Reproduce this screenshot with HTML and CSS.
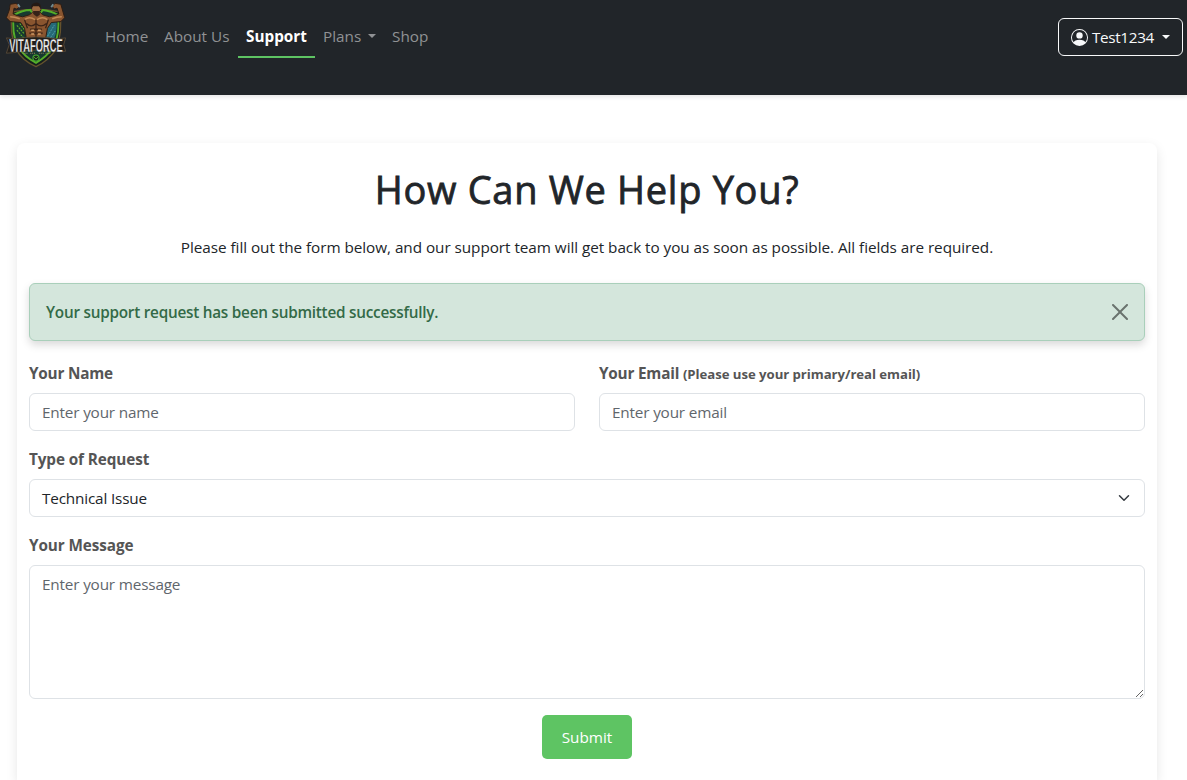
FILE: index.html
```html
<!DOCTYPE html>
<html lang="en">
<head>
<meta charset="utf-8">
<title>VitaForce Support</title>
<link rel="stylesheet" href="styles.css">
</head>
<body>
<header class="navbar">
  <a class="brand" href="#" aria-label="VitaForce">
    <svg class="logo" width="64" height="70" viewBox="-1.5 -2.5 67 73" preserveAspectRatio="none">
      <path d="M7 10 Q32 4 57 10 Q60 32 53 49 Q45 61 32 67 Q18 61 11 49 Q4 32 7 10Z" fill="#15201d" stroke="#65522d" stroke-width="1.4"/>
      <path d="M9 13 Q18 8 26 8 L29 12 L36 12 L39 8 Q48 9 55 13 Q57 32 51 46 Q43 57 32 63 Q20 57 13 46 Q6 31 9 13Z" fill="#17392f" stroke="#55ae29" stroke-width="2"/>
      <path d="M36 16 L53 15 Q55 28 51 38 L37 38Z" fill="#266a78"/>
      <path d="M12 24l8 9M12 29l7 8M15 22l9 12M13 17l7 7" stroke="#61aa28" stroke-width="1.2" stroke-dasharray="2 1"/>
      <path d="M48 20l-8 13M51 24l-8 13M52 30l-5 7" stroke="#63b1ba" stroke-width="1" stroke-dasharray="1 1"/>
      <path d="M5 2 L11 1 L15 4 L12 7 L9 6 L8 12 Q12 14 18 15 L25 13 L29 10 L36 10 L39 13 L46 15 Q52 14 56 12 L54 6 L51 7 L49 4 L52 1 L58 2 L60 9 L62 16 L58 20 L48 21 L44 27 L42 38 L22 38 L20 27 L16 21 L5 20 L1 16 L4 8Z" fill="#89552f" stroke="#2b1b12"/>
      <path d="M5 15 Q9 15 15 17 M59 15 Q54 15 49 17 M20 18 Q25 14 31 18 M33 18 Q39 14 44 18" fill="none" stroke="#c58a56" stroke-width="1.6"/>
      <path d="M22 22 Q27 27 32 22 Q37 27 43 22 M32 18v19 M26 28h12 M25 32h14 M20 18l3 9 M45 18l-3 9" fill="none" stroke="#3c2417" stroke-width="1.4"/>
      <path d="M27 29h3M34 29h3M27 33h3M34 33h3" stroke="#d19b65" stroke-width="1.6"/>
      <path d="M28 8 Q27 1 33 1 Q38 2 36 9 L35 13 L29 13Z" fill="#9b6840"/>
      <path d="M27 7 Q26 0 33 0 Q38 1 37 7 L35 4 L29 4Z" fill="#251a15"/>
      <path d="M29 9h7v4l-3 2-4-3z" fill="#352118"/>
      <path d="M13 2l2 3M50 2l-2 3" stroke="#718b91" stroke-width="2"/>
      <path d="M1 37 L10 38 Q32 34 54 38 L63 37 L61 44 L63 51 L51 51 Q32 48 13 52 L1 53 L4 44Z" fill="#201d1a" stroke="#5f503b" stroke-width=".8"/>
      <text class="logo-name" x="32" y="51.5" text-anchor="middle" textLength="56" lengthAdjust="spacingAndGlyphs">VITAFORCE</text>
      <path d="M18 53h6M26 53h5M35 53h5M42 53h5" stroke="#a08866" stroke-width="1.1" stroke-dasharray="1 1"/>
      <circle cx="32" cy="58" r="3.2" fill="#172a1b" stroke="#49af32" stroke-width="1.1"/>
      <path d="M30 57l2 2 2-2" fill="none" stroke="#70b044" stroke-width=".8"/>
    </svg>
  </a>
  <nav class="menu">
    <a class="link home" href="#">Home</a>
    <a class="link about" href="#">About Us</a>
    <a class="link active" href="#">Support</a>
    <a class="link plans" href="#">Plans<span class="caret"></span></a>
    <a class="link shop" href="#">Shop</a>
  </nav>
  <button class="account" type="button">
    <svg width="17" height="17" viewBox="0 0 16 16" fill="currentColor"><path d="M11 6a3 3 0 1 1-6 0 3 3 0 0 1 6 0"/><path fill-rule="evenodd" d="M0 8a8 8 0 1 1 16 0A8 8 0 0 1 0 8m8-7a7 7 0 0 0-5.468 11.37C3.242 11.226 4.805 10 8 10s4.757 1.225 5.468 2.37A7 7 0 0 0 8 1"/></svg>
    <span class="user">Test1234</span><span class="caret"></span>
  </button>
</header>
<main class="card">
  <h1 class="title"><span>How Can We Help You?</span></h1>
  <p class="intro"><span>Please fill out the form below, and our support team will get back to you as soon as possible. All fields are required.</span></p>
  <div class="alert" role="alert">
    <span class="alert-text">Your support request has been submitted successfully.</span>
    <svg class="close" width="16" height="16" viewBox="0 0 16 16"><path d="M.293.293a1 1 0 0 1 1.414 0L8 6.586 14.293.293a1 1 0 1 1 1.414 1.414L9.414 8l6.293 6.293a1 1 0 0 1-1.414 1.414L8 9.414l-6.293 6.293a1 1 0 0 1-1.414-1.414L6.586 8 .293 1.707a1 1 0 0 1 0-1.414"/></svg>
  </div>
  <form class="form">
    <div class="row">
      <div class="field">
        <label class="label" for="name">Your Name</label>
        <input class="control" id="name" placeholder="Enter your name">
      </div>
      <div class="field">
        <label class="label" for="email">Your Email <small class="hint">(Please use your primary/real email)</small></label>
        <input class="control" id="email" placeholder="Enter your email">
      </div>
    </div>
    <div class="field">
      <label class="label request" for="type">Type of Request</label>
      <div class="control select" id="type"><span class="choice">Technical Issue</span>
        <svg width="16" height="12" viewBox="0 0 16 16" fill="none" stroke="#343a40" stroke-width="2" stroke-linecap="round" stroke-linejoin="round"><path d="m2 5 6 6 6-6"/></svg>
      </div>
    </div>
    <div class="field">
      <label class="label" for="message">Your Message</label>
      <textarea class="control message" id="message" placeholder="Enter your message"></textarea>
    </div>
    <button class="submit" type="button">Submit</button>
  </form>
</main>
</body>
</html>
```
FILE: styles.css
```css
* { box-sizing: border-box; }
body {
  margin: 0;
  background: #fff;
  color: #212529;
  font: 15.3px/24px "Open Sans", "Noto Sans", sans-serif;
  letter-spacing: -0.1px;
}
.navbar {
  display: flex;
  align-items: flex-start;
  height: 95px;
  padding: 0 4px 0 4px;
  background: #212529;
  box-shadow: 0 2px 4px rgba(0, 0, 0, .1);
}
.brand { display: block; width: 93px; height: 70px; }
.logo { display: block; overflow: visible; }
.logo-name {
  font: bold 19px "Liberation Sans", sans-serif;
  letter-spacing: 0;
  fill: #eee;
  stroke: #252525;
  stroke-width: .3px;
}
.menu { display: flex; padding-top: 16px; }
.link {
  display: flex;
  align-items: center;
  height: 42px;
  padding: 0 8px;
  border-bottom: 2px solid transparent;
  color: #909294;
  letter-spacing: 0;
  text-decoration: none;
  white-space: nowrap;
}
.home { width: 59px; }
.about { width: 82px; }
.active {
  width: 77px;
  color: #fff;
  font-weight: 700;
  border-color: #5ec463;
}
.plans { width: 69px; }
.caret {
  margin-left: auto;
  border-top: 4.8px solid currentColor;
  border-left: 4.8px solid transparent;
  border-right: 4.8px solid transparent;
}
.account {
  display: flex;
  align-items: center;
  width: 125px;
  height: 38px;
  margin: 18px 0 0 auto;
  padding: 0 12px;
  border: 1px solid #f8f9fa;
  border-radius: 6px;
  background: transparent;
  color: #f8f9fa;
  font: inherit;
  letter-spacing: -.35px;
}
.user { margin-left: 4px; }
.card {
  width: 1140px;
  height: 637px;
  margin: 48px 0 0 17px;
  padding: 24px 12px 0;
  border-radius: 8px 8px 0 0;
  background: #fff;
  box-shadow: 0 4px 12px rgba(0, 0, 0, .1);
}
.title {
  margin: 0;
  font-size: 38px;
  font-weight: 500;
  line-height: 44px;
  letter-spacing: .7px;
  text-align: center;
  white-space: nowrap;
  -webkit-text-stroke: .8px #212529;
}
.intro {
  margin: 24px 0;
  letter-spacing: -.05px;
  text-align: center;
  white-space: nowrap;
}
.alert {
  display: flex;
  align-items: center;
  justify-content: space-between;
  height: 58px;
  padding: 0 16px;
  border: 1px solid #a9cfba;
  border-radius: 6px;
  background: #d4e6dc;
  color: #336a47;
  font-weight: 600;
  letter-spacing: -.24px;
  box-shadow: 0 4px 8px rgba(0, 0, 0, .15);
}
.close { fill: #6a736e; }
.form { display: flex; flex-direction: column; gap: 16px; padding-top: 20px; }
.row { display: grid; grid-template-columns: 1fr 1fr; gap: 24px; }
.field { display: flex; flex-direction: column; }
.label {
  height: 24px;
  margin-bottom: 8px;
  color: #555;
  font-weight: 700;
  white-space: nowrap;
}
.row .label { letter-spacing: -.2px; }
.label .hint { font-size: 13.2px; letter-spacing: -.05px; }
.control {
  width: 100%;
  height: 38px;
  padding: 6px 12px;
  border: 1px solid #dee2e6;
  border-radius: 6px;
  background: #fff;
  color: #212529;
  font: inherit;
  letter-spacing: -.17px;
}
.control::placeholder { color: #5f666c; opacity: 1; }
.select { display: flex; align-items: center; justify-content: space-between; }
.message { display: block; height: 134px; resize: vertical; }
.submit {
  align-self: center;
  width: 90px;
  height: 44px;
  padding: 0;
  border: 0;
  border-radius: 5px;
  background: #5ec463;
  color: #fff;
  font: inherit;
}
```
